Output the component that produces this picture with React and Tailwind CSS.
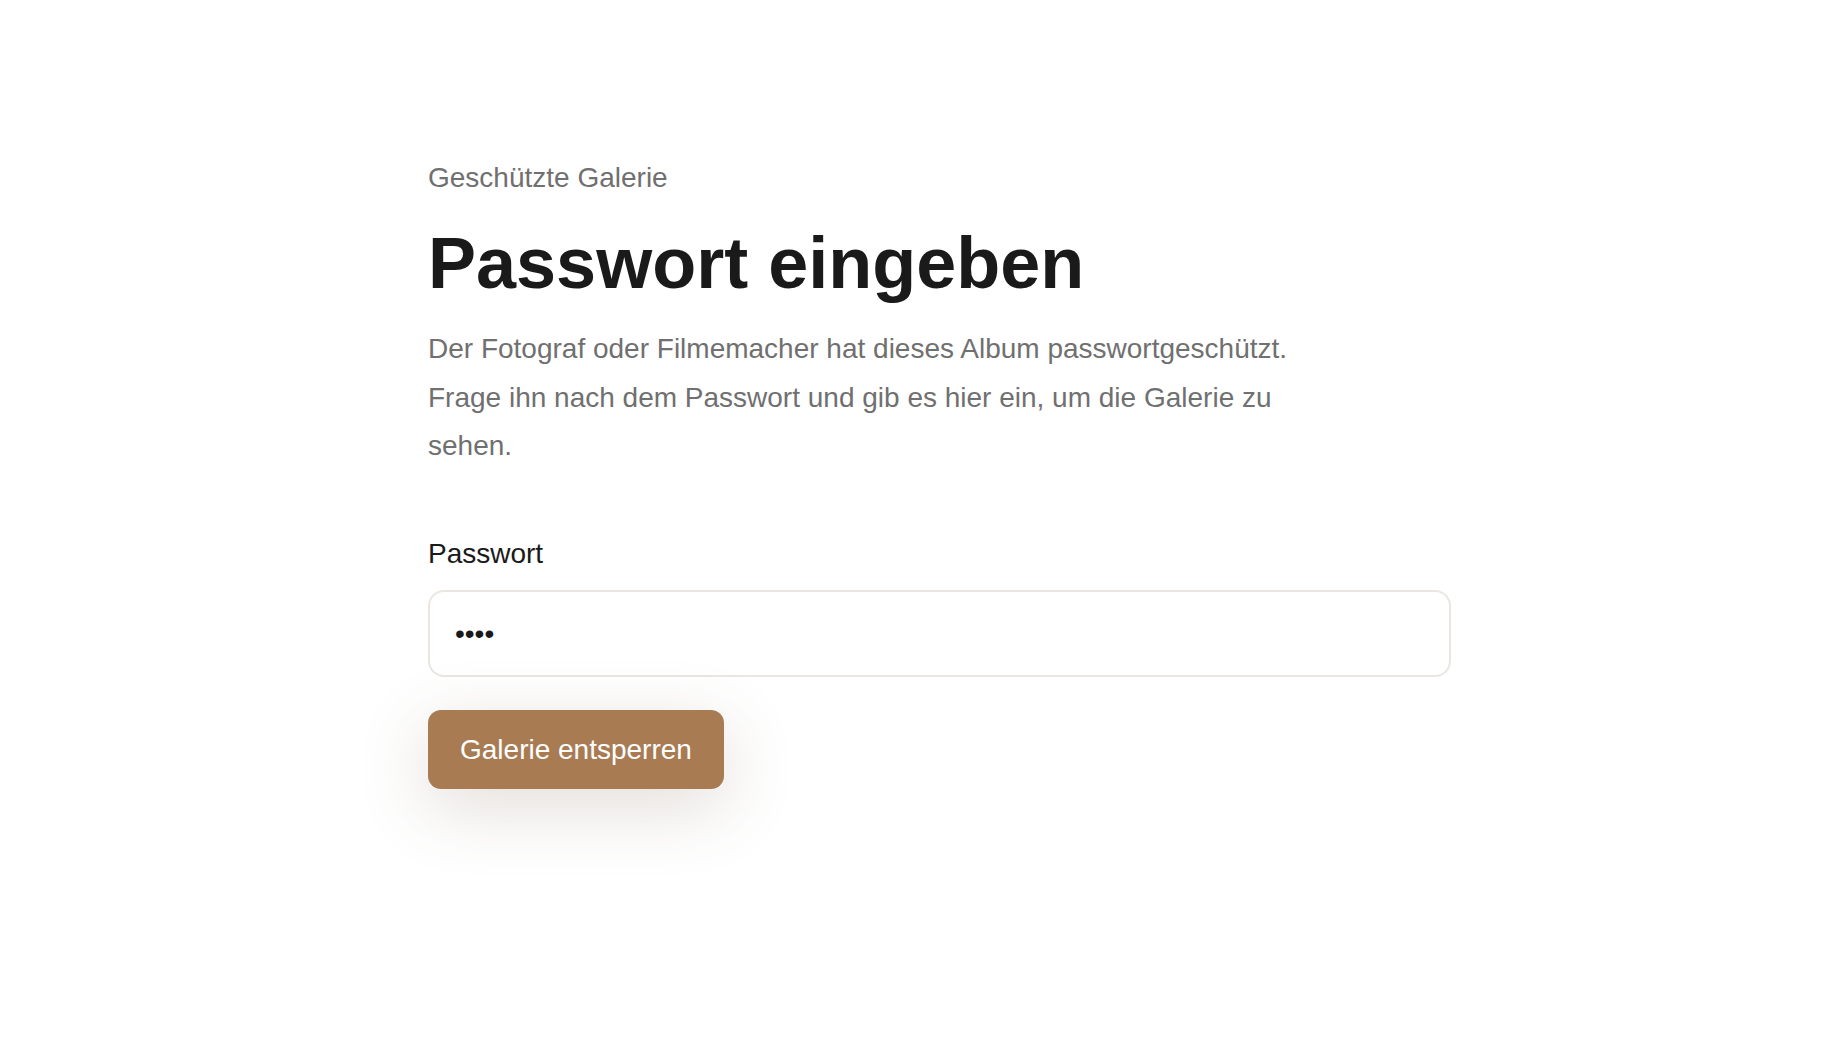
export default function App() {
  return (
    <div className="min-h-screen bg-white font-['Liberation_Sans',Arial,sans-serif]">
      <div className="pl-[428px] pt-[158px]">
        <div className="w-[1023px]">
          {/* Header */}
          <p className="text-[28px] leading-[40px] text-[#707070]">Geschützte Galerie</p>
          <h1 className="mt-[22px] text-[72px] leading-[86px] font-bold text-[#1a1a1a]">
            Passwort eingeben
          </h1>
          <p className="mt-[19px] max-w-[880px] text-[28px] leading-[48.5px] text-[#707070]">
            Der Fotograf oder Filmemacher hat dieses Album passwortgeschützt. Frage ihn nach dem
            Passwort und gib es hier ein, um die Galerie zu sehen.
          </p>

          {/* Form */}
          <form className="mt-[63.5px] flex flex-col" onSubmit={(e) => e.preventDefault()}>
            <label htmlFor="pw" className="text-[28px] leading-[40px] text-[#1a1a1a]">
              Passwort
            </label>
            <input
              id="pw"
              type="password"
              defaultValue="test"
              className="mt-[16px] h-[87px] w-full rounded-[16px] border-2 border-[#ebe6e2] bg-white px-[25px] text-[28px] text-[#1a1a1a] outline-none"
            />
            <div className="mt-[33px]">
              <button
                type="submit"
                className="h-[79px] rounded-[13px] bg-[#a87b53] px-[32px] text-[28px] text-white shadow-[0_18px_70px_rgba(110,85,60,0.2)]"
              >
                Galerie entsperren
              </button>
            </div>
          </form>
        </div>
      </div>
    </div>
  );
}
